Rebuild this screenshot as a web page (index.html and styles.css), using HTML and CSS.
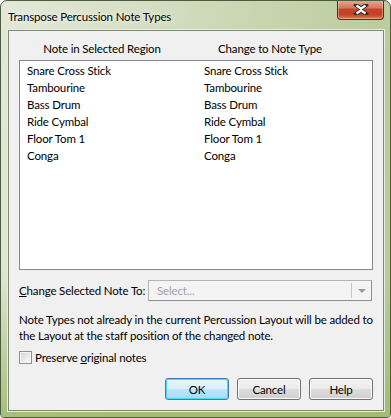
FILE: index.html
```html
<!DOCTYPE html>
<html lang="en">
<head>
    <meta charset="UTF-8">
    <title>Transpose Percussion Note Types</title>
    <link rel="stylesheet" href="styles.css">
</head>
<body>
    <div class="window">
        <div class="titlebar">
            <span class="title">Transpose Percussion Note Types</span>
            <div class="close-btn">
                <svg width="16" height="11" viewBox="0 0 16 11">
                    <path d="M3 1 L8 4.5 L13 1 M3 10 L8 6.5 L13 10" stroke="#3b2a28" stroke-width="4" fill="none" stroke-linecap="square"/>
                    <path d="M3.5 1.5 L8 4.6 L12.5 1.5 M3.5 9.5 L8 6.4 L12.5 9.5" stroke="#ffffff" stroke-width="2.2" fill="none"/>
                </svg>
            </div>
        </div>

        <div class="client">
            <div class="headers">
                <span>Note in Selected Region</span>
                <span>Change to Note Type</span>
            </div>

            <div class="listbox">
                <div class="row"><span>Snare Cross Stick</span><span>Snare Cross Stick</span></div>
                <div class="row"><span>Tambourine</span><span>Tambourine</span></div>
                <div class="row"><span>Bass Drum</span><span>Bass Drum</span></div>
                <div class="row"><span>Ride Cymbal</span><span>Ride Cymbal</span></div>
                <div class="row"><span>Floor Tom 1</span><span>Floor Tom 1</span></div>
                <div class="row"><span>Conga</span><span>Conga</span></div>
            </div>

            <div class="change-row">
                <label><u>C</u>hange Selected Note To:</label>
                <div class="combo">
                    <span class="combo-text">Select...</span>
                    <span class="combo-sep"></span>
                    <span class="combo-arrow"></span>
                </div>
            </div>

            <p class="note">Note Types not already in the current Percussion Layout will be added to the Layout at the staff position of the changed note.</p>

            <div class="check-row">
                <span class="checkbox"></span>
                <span>Preserve <u>o</u>riginal notes</span>
            </div>

            <div class="buttons">
                <button class="btn default">OK</button>
                <button class="btn">Cancel</button>
                <button class="btn">Help</button>
            </div>
        </div>
    </div>
</body>
</html>
```

FILE: styles.css
```css
html, body {
    margin: 0;
    padding: 0;
    background-color: #ffffff;
}
body {
    font-family: Lato, "Noto Sans", sans-serif;
    font-size: 11.5px;
    letter-spacing: -0.15px;
    color: #000000;
}
.window {
    width: 389px;
    height: 416px;
    border: 1px solid #4d5b3f;
    border-radius: 7px 7px 4px 4px;
    background: linear-gradient(100deg, #e3e8d9 0%, #d9e0c9 25%, #c8d6b0 55%, #bccd9f 80%, #b7ca98 100%);
    display: flex;
    flex-direction: column;
    overflow: hidden;
    position: relative;
}
.window::after {
    content: "";
    position: absolute;
    left: 0;
    right: 0;
    bottom: 0;
    height: 140px;
    background: linear-gradient(180deg, rgba(160, 186, 114, 0) 0%, rgba(160, 186, 114, 0.9) 100%);
    pointer-events: none;
}
.titlebar {
    height: 29px;
    display: flex;
    align-items: center;
    padding-left: 7px;
    position: relative;
}
.title {
    font-size: 11.5px;
    color: #000000;
    text-shadow: 0 0 6px #f4f6ee, 0 0 3px #f4f6ee;
    margin-top: 1px;
}
.close-btn {
    position: absolute;
    top: -1px;
    right: 6px;
    width: 45px;
    height: 19px;
    border: 1px solid #5a2a22;
    border-top: none;
    border-radius: 0 0 4px 4px;
    background: linear-gradient(180deg, #e9a99a 0%, #d47a62 40%, #c5442a 50%, #c24026 75%, #e07b50 100%);
    box-shadow: inset 0 0 0 1px rgba(255, 255, 255, 0.35);
    display: flex;
    align-items: center;
    justify-content: center;
}
.client {
    position: relative;
    z-index: 1;
    margin: 0 6px 6px 7px;
    flex: 1;
    background-color: #f0f0f0;
    border: 1px solid #7f8a70;
    box-shadow: 0 0 0 1px #e8eede;
    padding: 0 10px 0 10px;
    display: flex;
    flex-direction: column;
}
.headers {
    display: grid;
    grid-template-columns: 166px 170px;
    text-align: center;
    line-height: 16px;
    margin-top: 10px;
}
.listbox {
    margin-top: 3px;
    height: 207px;
    background-color: #ffffff;
    border: 1px solid #828790;
    padding-top: 1px;
}
.row {
    display: grid;
    grid-template-columns: 177px 1fr;
    height: 17px;
    line-height: 17px;
}
.row span {
    padding-left: 7px;
}
.change-row {
    display: flex;
    align-items: center;
    margin-top: 10px;
    height: 21px;
}
.change-row label {
    width: 129px;
    white-space: nowrap;
}
.combo {
    flex: 1;
    height: 19px;
    border: 1px solid #b5b5b5;
    border-right-color: #8e8e8e;
    border-bottom-color: #8e8e8e;
    background-color: #f4f4f4;
    display: flex;
    align-items: center;
    margin-right: 1px;
}
.combo-text {
    flex: 1;
    color: #a3a3a3;
    padding-left: 8px;
}
.combo-sep {
    width: 1px;
    height: 15px;
    background-color: #c6c6c6;
}
.combo-arrow {
    width: 0;
    height: 0;
    border-left: 4px solid transparent;
    border-right: 4px solid transparent;
    border-top: 4px solid #9a9a9a;
    margin: 0 5px 0 6px;
}
.note {
    margin: 11px 0 0 0;
    line-height: 16px;
}
.check-row {
    display: flex;
    align-items: center;
    margin-top: 7px;
    height: 13px;
}
.checkbox {
    width: 11px;
    height: 11px;
    border: 1px solid #8e8f8f;
    background: linear-gradient(135deg, #d2d2d2 0%, #ededed 60%, #fafafa 100%);
    box-shadow: inset 0 0 0 1px #f4f4f4;
    margin-right: 3px;
}
.buttons {
    display: flex;
    justify-content: flex-end;
    gap: 8px;
    margin-top: auto;
    margin-bottom: 10px;
}
.btn {
    width: 64px;
    height: 22px;
    padding: 0;
    font-family: inherit;
    font-size: 11.5px;
    letter-spacing: inherit;
    color: #000000;
    border: 1px solid #707070;
    border-radius: 3px;
    background: linear-gradient(180deg, #f2f2f2 0%, #ebebeb 50%, #dddddd 51%, #cfcfcf 100%);
    box-shadow: inset 0 0 0 1px #fcfcfc;
}
.btn.default {
    border-color: #3c7fb1;
    background: linear-gradient(180deg, #eaf6fd 0%, #d9f0fc 50%, #bee6fd 51%, #a7d9f5 100%);
    box-shadow: inset 0 0 0 1px #48d8fb;
}
```
